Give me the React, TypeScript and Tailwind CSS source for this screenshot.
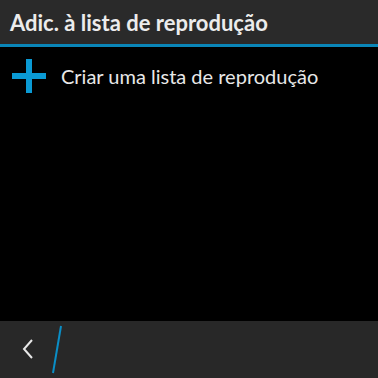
import React from 'react';

const App: React.FC = () => {
  return (
    <div className="w-[378px] h-[378px] bg-black flex flex-col overflow-hidden" style={{ fontFamily: 'Lato, sans-serif' }}>
      <div className="h-[44px] bg-[#2a2a2a] flex items-center pl-[10px] shrink-0">
        <h1 className="text-[22px] font-bold text-[#ececec]">Adic. à lista de reprodução</h1>
      </div>
      <div className="h-[3px] bg-[#0a86b8] shrink-0" />

      <div className="flex-1">
        <div className="flex items-center h-[58px] pl-[12px]">
          <svg width="34" height="34" viewBox="0 0 34 34" className="shrink-0">
            <rect x="14" y="0" width="6" height="34" fill="#0a9ad4" />
            <rect x="0" y="14" width="34" height="6" fill="#0a9ad4" />
          </svg>
          <span className="ml-[15px] text-[20px] text-[#e8e8e8]">Criar uma lista de reprodução</span>
        </div>
      </div>

      <div className="h-[57px] bg-[#282828] flex items-center shrink-0">
        <svg width="80" height="57" viewBox="0 0 80 57">
          <polyline points="32,19 24,28 32,37" fill="none" stroke="#e8e8e8" strokeWidth="2" />
          <line x1="61" y1="5" x2="53" y2="52" stroke="#0a8ec6" strokeWidth="2" />
        </svg>
      </div>
    </div>
  );
};

export default App;
